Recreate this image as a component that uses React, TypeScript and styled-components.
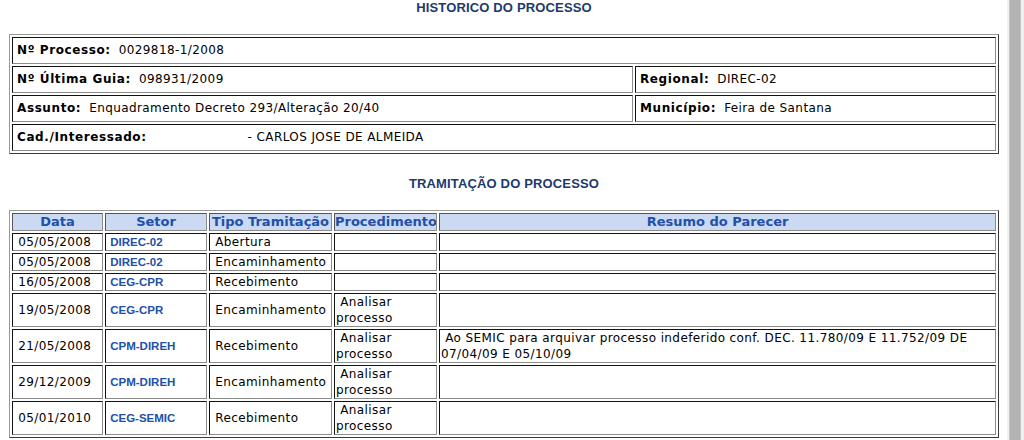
import styled, { createGlobalStyle } from 'styled-components';

const GlobalStyle = createGlobalStyle`
    html, body {
        margin: 0;
        padding: 0;
        background: #fff;
    }
    body {
        font-family: "DejaVu Sans", Verdana, sans-serif;
        font-size: 12px;
        letter-spacing: 0.4px;
        color: #000;
    }
`;

const Screen = styled.div`
    display: flex;
    width: 1024px;
    height: 440px;
    overflow: hidden;
`;

const Page = styled.div`
    flex: 1;
    padding: 0 8px 0 9px;
`;

const Scrollbar = styled.div`
    width: 17px;
    display: flex;
    background: #f0f0f0;
    padding: 0 3px 0 2px;
    box-sizing: border-box;
`;

const Thumb = styled.div`
    flex: 1;
    background: #b3b3b3;
    border-left: 1px solid #c6c6c6;
    border-right: 1px solid #c6c6c6;
`;

const Title = styled.h2<{ $space: number }>`
    margin: ${p => p.$space}px 0 0;
    font: bold 13px/15px "Liberation Sans", Arial, sans-serif;
    letter-spacing: 0.15px;
    color: #1b3a6e;
    text-align: center;
`;

const Frame = styled.table<{ $space: number }>`
    width: 100%;
    margin-top: ${p => p.$space}px;
    table-layout: fixed;
    border-collapse: separate;
    border-spacing: 2px;
    border: 1px solid;
    border-color: #9a9a9a #3a3a3a #3a3a3a #9a9a9a;
`;

const Col = styled.col<{ $w: number }>`
    width: ${p => p.$w}px;
`;

const InfoCell = styled.td`
    border: 1px solid;
    border-color: #111 #8c8c8c #8c8c8c #111;
    padding: 5px 4px;
    line-height: 15px;
    white-space: nowrap;
`;

const Label = styled.b`
    font-weight: bold;
    letter-spacing: 0.6px;
`;

const Value = styled.span<{ $gap?: number }>`
    padding-left: ${p => p.$gap ?? 8}px;
`;

const Head = styled.th`
    border: 1px solid;
    border-color: #555 #8c8c8c #8c8c8c #555;
    background: #cbd9f3;
    color: #2150a8;
    font-size: 13px;
    font-weight: bold;
    letter-spacing: 0;
    line-height: 16px;
    padding: 0;
    text-align: center;
    white-space: nowrap;
    overflow: hidden;
`;

const Cell = styled.td`
    border: 1px solid;
    border-color: #111 #8c8c8c #8c8c8c #111;
    padding: 0 1px;
    line-height: 16px;
    vertical-align: middle;
`;

const Sector = styled(Cell)`
    font: bold 11.5px/16px "Liberation Sans", Arial, sans-serif;
    letter-spacing: 0;
    color: #2150a8;
`;

type Step = {
    date: string;
    sector: string;
    kind: string;
    action?: string;
    note?: string;
};

const steps: Step[] = [
    { date: '05/05/2008', sector: 'DIREC-02', kind: 'Abertura' },
    { date: '05/05/2008', sector: 'DIREC-02', kind: 'Encaminhamento' },
    { date: '16/05/2008', sector: 'CEG-CPR', kind: 'Recebimento' },
    { date: '19/05/2008', sector: 'CEG-CPR', kind: 'Encaminhamento', action: 'Analisar processo' },
    {
        date: '21/05/2008',
        sector: 'CPM-DIREH',
        kind: 'Recebimento',
        action: 'Analisar processo',
        note: 'Ao SEMIC para arquivar processo indeferido conf. DEC. 11.780/09 E 11.752/09 DE 07/04/09 E 05/10/09',
    },
    { date: '29/12/2009', sector: 'CPM-DIREH', kind: 'Encaminhamento', action: 'Analisar processo' },
    { date: '05/01/2010', sector: 'CEG-SEMIC', kind: 'Recebimento', action: 'Analisar processo' },
];

const sp = (s?: string) => (s ? '\u00a0' + s : '');

export default function App() {
    return (
        <Screen>
            <GlobalStyle />
            <Page>
                <Title $space={0}>HISTORICO DO PROCESSO</Title>
                <Frame $space={19}>
                    <colgroup>
                        <Col $w={621} />
                        <Col $w={361} />
                    </colgroup>
                    <tbody>
                        <tr>
                            <InfoCell colSpan={2}>
                                <Label>Nº Processo:</Label>
                                <Value>0029818-1/2008</Value>
                            </InfoCell>
                        </tr>
                        <tr>
                            <InfoCell>
                                <Label>Nº Última Guia:</Label>
                                <Value>098931/2009</Value>
                            </InfoCell>
                            <InfoCell>
                                <Label>Regional:</Label>
                                <Value>DIREC-02</Value>
                            </InfoCell>
                        </tr>
                        <tr>
                            <InfoCell>
                                <Label>Assunto:</Label>
                                <Value>Enquadramento Decreto 293/Alteração 20/40</Value>
                            </InfoCell>
                            <InfoCell>
                                <Label>Município:</Label>
                                <Value>Feira de Santana</Value>
                            </InfoCell>
                        </tr>
                        <tr>
                            <InfoCell colSpan={2}>
                                <Label>Cad./Interessado:</Label>
                                <Value $gap={101}>- CARLOS JOSE DE ALMEIDA</Value>
                            </InfoCell>
                        </tr>
                    </tbody>
                </Frame>

                <Title $space={22}>TRAMITAÇÃO DO PROCESSO</Title>
                <Frame $space={19}>
                    <colgroup>
                        <Col $w={91} />
                        <Col $w={102} />
                        <Col $w={123} />
                        <Col $w={103} />
                        <Col $w={557} />
                    </colgroup>
                    <thead>
                        <tr>
                            <Head>Data</Head>
                            <Head>Setor</Head>
                            <Head>Tipo Tramitação</Head>
                            <Head>Procedimento</Head>
                            <Head>Resumo do Parecer</Head>
                        </tr>
                    </thead>
                    <tbody>
                        {steps.map((s, i) => (
                            <tr key={i}>
                                <Cell>{sp(s.date)}</Cell>
                                <Sector>{sp(s.sector)}</Sector>
                                <Cell>{sp(s.kind)}</Cell>
                                <Cell>{sp(s.action)}</Cell>
                                <Cell>{sp(s.note)}</Cell>
                            </tr>
                        ))}
                    </tbody>
                </Frame>
            </Page>
            <Scrollbar>
                <Thumb />
            </Scrollbar>
        </Screen>
    );
}
